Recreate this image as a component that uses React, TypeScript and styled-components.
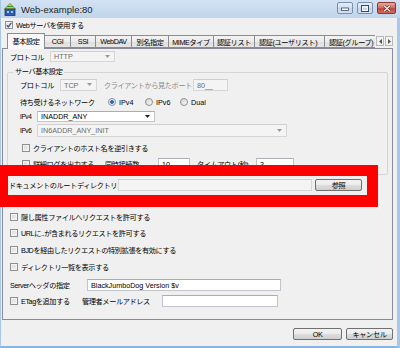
import { createGlobalStyle, styled } from "styled-components";

const GlobalStyle = createGlobalStyle`
  html, body { margin: 0; padding: 0; background: #f0f0f0; }
  body {
    font-family: "Liberation Sans", "Noto Sans CJK JP", sans-serif;
    font-size: 7.2px;
    letter-spacing: -0.4px;
    color: #000;
  }
  * { box-sizing: border-box; }
`;

const Window = styled.div`
  position: relative;
  width: 400px;
  height: 348px;
  display: flex;
  flex-direction: column;
  background: #f0f0f0;
  overflow: hidden;
`;

const TitleBar = styled.div`
  flex: none;
  height: 18px;
  display: flex;
  align-items: center;
  gap: 5px;
  padding: 0 4px 0 3px;
  background: linear-gradient(#d3e2f3, #c0d4eb);
  border-left: 1px solid #a9c5e4;
`;

const Title = styled.span`
  font-size: 9.5px;
  letter-spacing: 0;
  color: #1e1e1e;
`;

const Caption = styled.div`
  margin-left: auto;
  display: flex;
  gap: 4px;
  align-self: flex-start;
  margin-top: 2px;
`;

const CapButton = styled.div<{ $w: number; $close?: boolean }>`
  width: ${(p) => p.$w}px;
  height: 12px;
  border: 1px solid ${(p) => (p.$close ? "#8b3a32" : "#7890ad")};
  border-radius: 2px;
  display: flex;
  align-items: center;
  justify-content: center;
  background: ${(p) =>
    p.$close
      ? "linear-gradient(#e8a99f, #d06a5d 50%, #c2473a 51%, #cf6a5a)"
      : "linear-gradient(#e6eef8, #d2dfef 50%, #c2d3ea 51%, #d4e2f2)"};
`;

const Client = styled.div`
  flex: 1;
  display: flex;
  flex-direction: column;
  padding-left: 1px;
  border-left: 1px solid #a9c7e8;
  border-right: 3px solid #a9c7e8;
  border-bottom: 2px solid #86b7e3;
`;

const Row = styled.div<{ $top?: number; $indent?: number; $h?: number }>`
  display: flex;
  align-items: center;
  flex: none;
  height: ${(p) => p.$h ?? 11}px;
  margin-top: ${(p) => p.$top ?? 0}px;
  padding-left: ${(p) => p.$indent ?? 0}px;
  white-space: nowrap;
`;

const Label = styled.span<{ $w?: number; $muted?: boolean; $small?: boolean; $ml?: number }>`
  flex: none;
  width: ${(p) => (p.$w ? `${p.$w}px` : "auto")};
  margin-left: ${(p) => p.$ml ?? 0}px;
  color: ${(p) => (p.$muted ? "#8a8a8a" : "#000")};
  font-size: ${(p) => (p.$small ? 6.5 : 7.2)}px;
  overflow: hidden;
`;

const CheckBox = styled.span`
  flex: none;
  width: 8px;
  height: 8px;
  margin-right: 3px;
  border: 1px solid #8e8f8f;
  background: linear-gradient(135deg, #d6d6d6, #f7f7f7);
  box-shadow: inset 0 0 0 1px #f4f4f4;
  display: flex;
  align-items: center;
  justify-content: center;
`;

const RadioDot = styled.span<{ $on?: boolean }>`
  flex: none;
  width: 8px;
  height: 8px;
  margin-right: 3px;
  border-radius: 50%;
  border: 1px solid #8e8f8f;
  background: ${(p) =>
    p.$on
      ? "radial-gradient(circle, #1f5fb4 0, #3a7bd0 1.8px, #e9eef4 2.2px, #f4f4f4 100%)"
      : "linear-gradient(135deg, #d6d6d6, #f7f7f7)"};
`;

const RadioItem = styled.span<{ $w: number }>`
  flex: none;
  width: ${(p) => p.$w}px;
  display: flex;
  align-items: center;
  letter-spacing: 0;
`;

const Field = styled.div<{ $w: number; $off?: boolean; $ml?: number }>`
  flex: none;
  position: relative;
  width: ${(p) => p.$w}px;
  height: 100%;
  margin-left: ${(p) => p.$ml ?? 0}px;
  display: flex;
  align-items: center;
  padding: 0 3px;
  letter-spacing: 0;
  border: 1px solid ${(p) => (p.$off ? "#d6d6d6" : "#c2c5cb")};
  border-top-color: ${(p) => (p.$off ? "#cfcfcf" : "#abadb3")};
  background: ${(p) => (p.$off ? "#f4f4f4" : "#fff")};
  color: ${(p) => (p.$off ? "#6d6d6d" : "#000")};
  overflow: hidden;
`;

const Arrow = styled.svg<{ $off?: boolean }>`
  position: absolute;
  right: 4px;
  top: 50%;
  margin-top: -2px;
  fill: ${(p) => (p.$off ? "#9a9a9a" : "#222")};
`;

const TabStrip = styled.div`
  flex: none;
  display: flex;
  align-items: flex-end;
  height: 15px;
  margin-top: 4px;
  padding-left: 5px;
  position: relative;
  z-index: 1;
  margin-bottom: -1px;
`;

const TabViewport = styled.div`
  display: flex;
  align-items: flex-end;
  width: 368px;
  height: 16px;
  overflow: hidden;
`;

const Tab = styled.div<{ $w: number; $active?: boolean }>`
  flex: none;
  width: ${(p) => p.$w}px;
  height: ${(p) => (p.$active ? 16 : 13)}px;
  margin-bottom: ${(p) => (p.$active ? 0 : 1)}px;
  padding-bottom: ${(p) => (p.$active ? 1 : 0)}px;
  display: flex;
  align-items: center;
  justify-content: ${(p) => (p.$w > 50 ? "flex-start" : "center")};
  padding-left: ${(p) => (p.$w > 50 ? 4 : 0)}px;
  border: 1px solid #898c95;
  border-bottom: ${(p) => (p.$active ? "none" : "1px solid #898c95")};
  margin-right: -1px;
  background: ${(p) =>
    p.$active ? "#f9f9f9" : "linear-gradient(#f3f3f3, #ebebeb 50%, #dedede 51%, #e6e6e6)"};
  overflow: hidden;
  white-space: nowrap;
`;

const TabScroll = styled.div`
  display: flex;
  gap: 1px;
  margin-left: 1px;
  margin-bottom: 3px;
`;

const ScrollBtn = styled.div`
  width: 8px;
  height: 10px;
  border: 1px solid #b9b9b9;
  background: #f3f3f3;
  display: flex;
  align-items: center;
  justify-content: center;
`;

const Panel = styled.div`
  flex: none;
  width: 391px;
  height: 272px;
  border: 1px solid #898c95;
  display: flex;
  flex-direction: column;
`;

const Group = styled.div`
  position: relative;
  flex: none;
  width: 381px;
  margin: 10px 0 0 4px;
  padding-bottom: 4px;
  border: 1px solid #d5d5d5;
  border-radius: 2px;
  display: flex;
  flex-direction: column;
`;

const Legend = styled.span`
  position: absolute;
  top: -6px;
  left: 5px;
  padding: 0 2px;
  background: #f0f0f0;
  line-height: 10px;
`;

const Button = styled.div<{ $w: number; $ml?: number }>`
  flex: none;
  width: ${(p) => p.$w}px;
  height: 100%;
  margin-left: ${(p) => p.$ml ?? 0}px;
  display: flex;
  align-items: center;
  justify-content: center;
  border: 1px solid #707070;
  border-radius: 2px;
  background: linear-gradient(#f2f2f2, #ebebeb 50%, #dddddd 51%, #cfcfcf);
`;

const Footer = styled.div`
  flex: none;
  display: flex;
  justify-content: flex-end;
  gap: 4px;
  height: 12px;
  margin-top: 8px;
  padding-right: 4px;
`;

const Highlight = styled.div`
  position: absolute;
  left: 0;
  top: 165px;
  width: 378px;
  height: 42px;
  border-style: solid;
  border-color: #ff0000;
  border-width: 11px 11px 12px 8px;
  pointer-events: none;
`;

const Check = ({ on }: { on?: boolean }) => (
  <CheckBox>
    {on && (
      <svg width="6" height="6" viewBox="0 0 6 6">
        <path d="M0.6 3.2 L2.3 5 L5.4 0.8" stroke="#3d5a8f" strokeWidth="1.3" fill="none" />
      </svg>
    )}
  </CheckBox>
);

const Down = ({ off }: { off?: boolean }) => (
  <Arrow $off={off} width="5" height="3" viewBox="0 0 5 3">
    <path d="M0 0 H5 L2.5 3 Z" />
  </Arrow>
);

const tabs = [
  { name: "基本設定", w: 38 },
  { name: "CGI", w: 27 },
  { name: "SSI", w: 26 },
  { name: "WebDAV", w: 37 },
  { name: "別名指定", w: 38 },
  { name: "MIMEタイプ", w: 46 },
  { name: "認証リスト", w: 42 },
  { name: "認証(ユーザリスト)", w: 71 },
  { name: "認証(グループ)", w: 60 },
];

const options = [
  "隠し属性ファイルへリクエストを許可する",
  "URLに..が含まれるリクエストを許可する",
  "BJDを経由したリクエストの特別拡張を有効にする",
  "ディレクトリ一覧を表示する",
];

export default function App() {
  return (
    <>
      <GlobalStyle />
      <Window>
        <TitleBar>
          <svg width="12" height="13" viewBox="0 0 12 13">
            <path d="M6 0.5 L11.5 6 H0.5 Z" fill="#d8cf16" stroke="#6a8a1c" strokeWidth="0.8" />
            <path d="M3 3.5 H9" stroke="#2f9a3a" strokeWidth="1" />
            <rect x="1" y="6" width="10" height="6.5" fill="#2c5cab" stroke="#1b3a73" strokeWidth="0.8" />
            <rect x="3" y="8" width="2" height="2" fill="#9cc4f0" />
            <rect x="7" y="8" width="2" height="2" fill="#9cc4f0" />
          </svg>
          <Title>Web-example:80</Title>
          <Caption>
            <CapButton $w={16}>
              <svg width="8" height="6" viewBox="0 0 8 6">
                <rect x="0.5" y="3" width="7" height="2.5" fill="#fff" stroke="#3b4a60" strokeWidth="0.8" />
              </svg>
            </CapButton>
            <CapButton $w={16}>
              <svg width="8" height="7" viewBox="0 0 8 7">
                <rect x="0.5" y="0.5" width="7" height="6" fill="none" stroke="#3b4a60" strokeWidth="1" />
                <rect x="1.5" y="2" width="5" height="3.5" fill="none" stroke="#fff" strokeWidth="0.8" />
              </svg>
            </CapButton>
            <CapButton $w={19} $close>
              <svg width="8" height="7" viewBox="0 0 8 7">
                <path d="M1 0.8 L7 6.2 M7 0.8 L1 6.2" stroke="#5a1a14" strokeWidth="2.4" />
                <path d="M1 0.8 L7 6.2 M7 0.8 L1 6.2" stroke="#fff" strokeWidth="1.2" />
              </svg>
            </CapButton>
          </Caption>
        </TitleBar>

        <Client>
          <Row $top={1} $indent={3}>
            <Check on />
            <Label>Webサーバを使用する</Label>
          </Row>

          <TabStrip>
            <TabViewport>
              {tabs.map((t, i) => (
                <Tab key={t.name} $w={t.w} $active={i === 0}>
                  {t.name}
                </Tab>
              ))}
            </TabViewport>
            <TabScroll>
              <ScrollBtn>
                <svg width="3" height="5" viewBox="0 0 3 5">
                  <path d="M3 0 V5 L0 2.5 Z" fill="#555" />
                </svg>
              </ScrollBtn>
              <ScrollBtn>
                <svg width="3" height="5" viewBox="0 0 3 5">
                  <path d="M0 0 V5 L3 2.5 Z" fill="#555" />
                </svg>
              </ScrollBtn>
            </TabScroll>
          </TabStrip>

          <Panel>
            <Row $top={2} $indent={7}>
              <Label $w={40}>プロトコル</Label>
              <Field $w={65} $off>
                HTTP
                <Down off />
              </Field>
            </Row>

            <Group>
              <Legend>サーバ基本設定</Legend>
              <Row $top={6} $indent={12} $h={12}>
                <Label $w={40}>プロトコル</Label>
                <Field $w={37} $off>
                  TCP
                  <Down off />
                </Field>
                <Label $w={89} $muted $ml={7}>
                  クライアントから見たポート
                </Label>
                <Field $w={35} $off>
                  80__
                </Field>
              </Row>
              <Row $top={5} $indent={12} $h={12}>
                <Label $w={88}>待ち受けるネットワーク</Label>
                <RadioItem $w={37}>
                  <RadioDot $on />
                  IPv4
                </RadioItem>
                <RadioItem $w={35}>
                  <RadioDot />
                  IPv6
                </RadioItem>
                <RadioItem $w={35}>
                  <RadioDot />
                  Dual
                </RadioItem>
              </Row>
              <Row $top={3} $indent={12}>
                <Label $w={17} $small>IPv4</Label>
                <Field $w={118}>
                  INADDR_ANY
                  <Down />
                </Field>
              </Row>
              <Row $top={2} $indent={12} $h={13}>
                <Label $w={17} $small>IPv6</Label>
                <Field $w={250} $off>
                  IN6ADDR_ANY_INIT
                  <Down off />
                </Field>
              </Row>
              <Row $top={5} $indent={14}>
                <Check />
                <Label>クライアントのホスト名を逆引きする</Label>
              </Row>
              <Row $top={5} $indent={14} $h={12}>
                <Check />
                <Label $w={72}>詳細ログを出力する</Label>
                <Label $w={53}>同時接続数</Label>
                <Field $w={32}>10</Field>
                <Label $w={59} $ml={7}>
                  タイムアウト(秒)
                </Label>
                <Field $w={38}>3</Field>
              </Row>
            </Group>

            <Row $top={4} $indent={6} $h={12}>
              <Label $w={109}>ドキュメントのルートディレクトリ</Label>
              <Field $w={194} $off />
              <Button $w={47} $ml={3}>参照</Button>
            </Row>

            {options.map((o, i) => (
              <Row key={o} $top={i === 0 ? 20 : i === 1 ? 5 : 6} $indent={7}>
                <Check />
                <Label>{o}</Label>
              </Row>
            ))}

            <Row $top={7} $indent={7} $h={12}>
              <Label $w={77}>Serverヘッダの指定</Label>
              <Field $w={194}>BlackJumboDog Version $v</Field>
            </Row>
            <Row $top={4} $indent={7} $h={12}>
              <Check />
              <Label $w={61}>ETagを追加する</Label>
              <Label $w={80}>管理者メールアドレス</Label>
              <Field $w={116} />
            </Row>
          </Panel>

          <Footer>
            <Button $w={49}>OK</Button>
            <Button $w={47}>キャンセル</Button>
          </Footer>
        </Client>

        <Highlight />
      </Window>
    </>
  );
}
